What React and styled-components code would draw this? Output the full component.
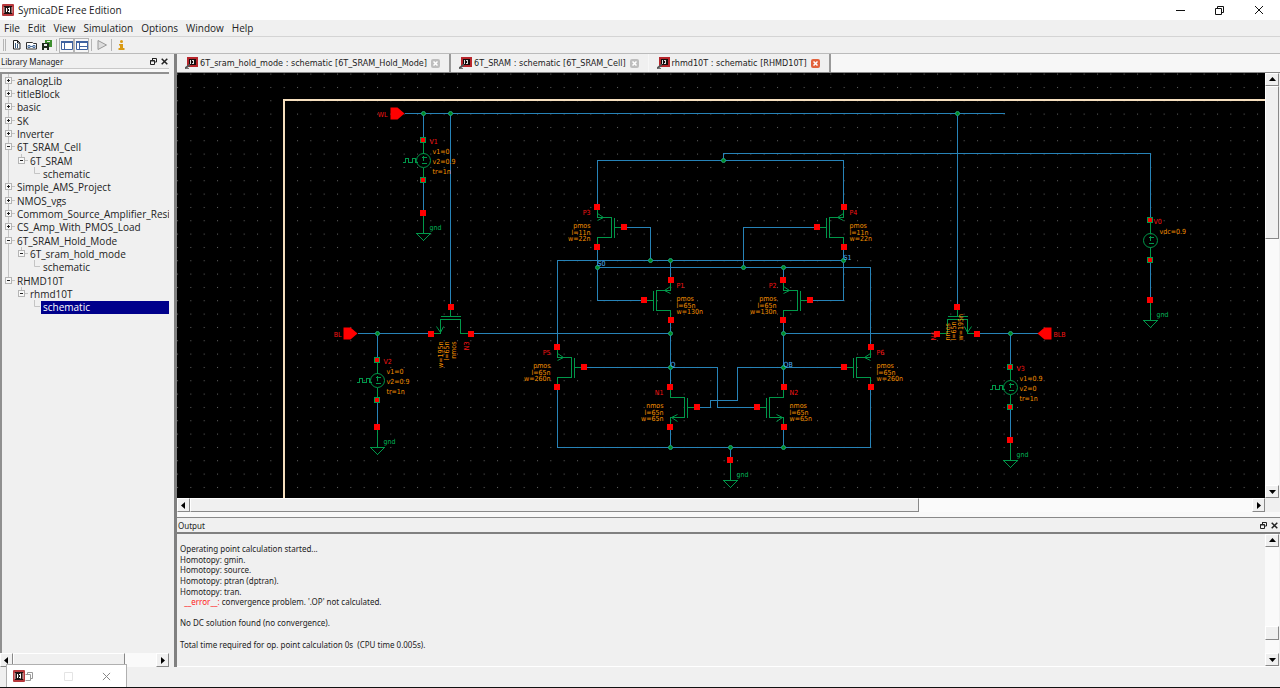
import styled, { createGlobalStyle } from 'styled-components';

const GlobalStyle = createGlobalStyle`
  * {
    box-sizing: border-box;
  }
  body {
    margin: 0;
    background: #f0f0f0;
    color: #222;
    font-family: 'Open Sans', 'Noto Sans', sans-serif;
    font-size: 10px;
  }
  button {
    margin: 0;
    padding: 0;
    border: none;
    background: none;
    color: inherit;
    font: inherit;
    display: flex;
    align-items: center;
    justify-content: center;
  }
  svg {
    display: block;
    flex: none;
  }
`;

const Page = styled.div`
  position: relative;
  height: 100vh;
  min-height: 600px;
  display: flex;
  flex-direction: column;
  overflow: hidden;
  border-bottom: 1px solid #111;
`;

const TitleBar = styled.header`
  flex: none;
  height: 20px;
  display: flex;
  align-items: center;
  background: #fff;
  padding: 0 2px;
  h1 {
    flex: 1;
    margin: 0 0 0 4px;
    font-size: 10px;
    line-height: 20px;
    font-weight: 400;
  }
`;

const WindowButton = styled.button`
  width: 39px;
  height: 20px;
`;

const MenuBar = styled.nav`
  flex: none;
  height: 16px;
  display: flex;
  align-items: center;
  gap: 8px;
  padding-left: 4px;
  button {
    line-height: 16px;
  }
`;

const ToolBar = styled.div`
  flex: none;
  height: 18px;
  display: flex;
  align-items: center;
  padding-left: 3px;
  border-top: 1px solid #d4d4d4;
  border-bottom: 1px solid #bbb;
`;

const ToolButton = styled.button`
  width: 15px;
  height: 15px;
  border: 1px solid ${({ $active }) => ($active ? '#b5b5b5' : 'transparent')};
  background: ${({ $active }) => ($active ? '#f6f6f6' : 'none')};
`;

const Separator = styled.span`
  width: ${({ $grip }) => ($grip ? '3px' : '1px')};
  height: 12px;
  margin: 0 ${({ $grip }) => ($grip ? '3px' : '2px')} 0 ${({ $grip }) => ($grip ? '0' : '2px')};
  border-left: 1px solid #b5b5b5;
  border-right: ${({ $grip }) => ($grip ? '1px solid #b5b5b5' : 'none')};
`;

const Workspace = styled.div`
  flex: 1;
  min-height: 0;
  display: grid;
  grid-template-columns: 174px minmax(0, 1fr);
  padding-bottom: 20px;
`;

const Dock = styled.aside`
  display: flex;
  flex-direction: column;
  min-height: 0;
  padding-right: 5px;
`;

const DockTitle = styled.div`
  flex: none;
  height: 14px;
  display: flex;
  align-items: center;
  gap: 4px;
  padding: 0 ${({ $wide }) => ($wide ? '2px' : '1px')} 0 1px;
  font-family: 'Noto Sans', sans-serif;
  font-size: 8px;
  h2 {
    flex: 1;
    margin: 0;
    font: inherit;
  }
`;

const DockRule = styled.div`
  flex: none;
  height: 4px;
  border-top: 1px solid #c8c8c8;
  background: #f8f8f8;
`;

const TreeBox = styled.div`
  flex: 1;
  min-height: 0;
  overflow: hidden;
  border-top: 2px solid #909090;
  border-left: 2px solid #909090;
`;

const Tree = styled.ul`
  height: 240px;
  margin: 0;
  padding: 0;
  list-style: none;
  display: grid;
  grid-template-rows: repeat(18, minmax(0, 1fr));
`;

const TreeRow = styled.li`
  display: flex;
  align-items: center;
  min-width: 0;
  button {
    flex: 1;
    min-width: 0;
    height: 100%;
    justify-content: flex-start;
    overflow: hidden;
    padding-left: 2px;
    white-space: nowrap;
    background: ${({ $selected }) => ($selected ? '#00008b' : 'none')};
    color: ${({ $selected }) => ($selected ? '#fff' : '#222')};
  }
`;

const Main = styled.main`
  display: flex;
  flex-direction: column;
  min-width: 0;
  min-height: 0;
  border-left: 3px solid #808080;
`;

const TabBar = styled.div`
  flex: none;
  height: 19px;
  display: flex;
  background: #f7f7f7;
  border-bottom: 1px solid #888;
`;

const Tab = styled.div`
  display: flex;
  align-items: center;
  gap: 2px;
  padding: 0 9px 0 8px;
  background: #f0f0f0;
  border-right: ${({ $divider }) => ($divider ? '2px solid #999' : '1px solid #f7f7f7')};
  font-family: 'DejaVu Sans Condensed', 'DejaVu Sans', sans-serif;
  font-size: 9px;
  white-space: nowrap;
`;

const TabClose = styled.button`
  width: 9px;
  height: 9px;
  margin-left: 2px;
  border-radius: 2px;
  background: ${({ $hot }) => ($hot ? '#e2623c' : '#bdbdbd')};
`;

const CanvasArea = styled.div`
  flex: 1;
  min-height: 0;
  display: grid;
  grid-template-columns: minmax(0, 1fr) 15px;
  grid-template-rows: minmax(0, 1fr) 14px;
`;

const Canvas = styled.div`
  overflow: hidden;
  background: #000;
  font-family: 'DejaVu Sans Condensed', 'DejaVu Sans', sans-serif;
`;

const ScrollBar = styled.div`
  display: flex;
  flex-direction: ${({ $vertical }) => ($vertical ? 'column' : 'row')};
  flex: none;
  min-width: 0;
  min-height: 0;
  margin-right: ${({ $vertical }) => ($vertical ? '1px' : '0')};
  height: ${({ $vertical }) => ($vertical ? 'auto' : '14px')};
  background: #fafafa;
`;

const ScrollButton = styled.button`
  flex: none;
  width: ${({ $vertical }) => ($vertical ? '14px' : '13px')};
  height: ${({ $vertical }) => ($vertical ? '13px' : '14px')};
  background: #f0f0f0;
  border: 1px solid;
  border-color: #fff #888 #888 #fff;
`;

const ScrollSpace = styled.div`
  flex: ${({ $grow }) => $grow};
`;

const ScrollThumb = styled.div`
  flex: ${({ $grow }) => $grow};
  background: #f0f0f0;
  border: 1px solid;
  border-color: #fff #888 #888 #fff;
`;

const Splitter = styled.div`
  flex: none;
  height: 6px;
  background: #f8f8f8;
  border-bottom: 1px solid #888;
`;

const OutputPanel = styled.section`
  flex: none;
  height: 149px;
  display: flex;
  flex-direction: column;
  border-bottom: 1px solid #fff;
`;

const OutputBody = styled.div`
  flex: 1;
  min-height: 0;
  display: grid;
  grid-template-columns: minmax(0, 1fr) 15px;
  border-top: 2px solid #808080;
`;

const Log = styled.div`
  height: 106px;
  margin: 10px 0 0 3px;
  display: grid;
  grid-template-rows: repeat(10, minmax(0, 1fr));
  align-items: center;
  font-family: 'Noto Sans', sans-serif;
  font-size: 8px;
  line-height: 10px;
  white-space: pre;
`;

const ErrorMark = styled.span`
  color: #ff1a1a;
`;

// minimised child window that floats over the status bar
const MiniWindow = styled.div`
  position: absolute;
  left: 6px;
  bottom: 0;
  width: 121px;
  height: 23px;
  display: flex;
  align-items: center;
  padding-left: 6px;
  background: #fff;
  border: 1px solid #b0b0b0;
  border-bottom: none;
  button {
    width: 39px;
    height: 20px;
  }
  button:first-of-type {
    width: 8px;
    margin-right: 16px;
  }
`;

const Logo = ({ size = 12 }) => (
  <svg width={size} height={size} viewBox='0 0 12 12'>
    <rect width='12' height='12' rx='1' fill='#b8383c' />
    <rect x='2' y='2' width='8' height='8' fill='#1b1010' />
    <path d='M1 4h2M1 6h2M1 8h2M9 4h2M9 6h2M9 8h2' stroke='#e8b8b8' />
    <path d='M4.5 4v4M4.5 6h1M7.5 3.5v5M6 4.5h1.500M6 7.500h1.500' stroke='#fff' fill='none' />
  </svg>
);

const TabIcon = () => (
  <svg width='13' height='12' viewBox='0 0 13 12'>
    <rect x='2' width='11' height='10' fill='#b8262c' />
    <rect x='4' y='2' width='7' height='6' fill='#160c0c' />
    <path d='M5.500 3v4M8.500 3v4M7 3.500h1.500M7 6.500h1.500' stroke='#ddd' />
    <path d='M0 11.500L5 7.500' stroke='#555' strokeWidth='2' />
    <path d='M1 11.500h3' stroke='#777' />
  </svg>
);

const Cross = ({ size = 7, color = '#222', width = 1 }) => (
  <svg width={size} height={size} viewBox='0 0 10 10'>
    <path d='M1 1l8 8M9 1l-8 8' stroke={color} strokeWidth={(width * 10) / size} />
  </svg>
);

const FloatIcon = () => (
  <svg width='7' height='7' viewBox='0 0 7 7' fill='none' stroke='#222'>
    <path d='M2 .5h4.500v3.500h-1.500M2.500 0v2' />
    <path d='M.5 2.500h4v4h-4zM0 3h5' />
  </svg>
);

const arrows = {
  up: 'M0 5L3.500 1L7 5z',
  down: 'M0 2L3.500 6L7 2z',
  left: 'M5 0L1 3.500L5 7z',
  right: 'M2 0L6 3.500L2 7z',
};

const Arrow = ({ to }) => (
  <ScrollButton $vertical={to === 'up' || to === 'down'} aria-label={`Scroll ${to}`}>
    <svg width='7' height='7'>
      <path d={arrows[to]} fill='#000' />
    </svg>
  </ScrollButton>
);

const DockButtons = () => (
  <>
    <button aria-label='Float'>
      <FloatIcon />
    </button>
    <button aria-label='Close'>
      <Cross width={1.5} />
    </button>
  </>
);

const guidePaths = {
  line: <path d='M6.500 0v14' />,
  last: <path d='M6.500 0v6.500h5.500' />,
  blank: null,
};

const Guide = ({ kind, end }) => {
  const toggle = kind === 'plus' || kind === 'minus';
  return (
    <svg width='13' height='14' fill='none' stroke='#c4c4c4'>
      {toggle ? (
        <>
          <path d={end ? 'M6.500 0v4M9 6.500h4' : 'M6.500 0v14M9 6.500h4'} />
          <rect x='3.500' y='3.500' width='6' height='6' fill='#f8f8f8' stroke='#b4b4b4' />
          <path d={kind === 'plus' ? 'M5 6.500h3M6.500 5v3' : 'M5 6.500h3'} stroke='#222' />
        </>
      ) : (
        guidePaths[kind]
      )}
    </svg>
  );
};

const tree = [
  ['analogLib', 'plus'],
  ['titleBlock', 'plus'],
  ['basic', 'plus'],
  ['SK', 'plus'],
  ['Inverter', 'plus'],
  ['6T_SRAM_Cell', 'minus'],
  ['6T_SRAM', 'line', 'minus'],
  ['schematic', 'line', 'blank', 'last'],
  ['Simple_AMS_Project', 'plus'],
  ['NMOS_vgs', 'plus'],
  ['Commom_Source_Amplifier_Resistor', 'plus'],
  ['CS_Amp_With_PMOS_Load', 'plus'],
  ['6T_SRAM_Hold_Mode', 'minus'],
  ['6T_sram_hold_mode', 'line', 'minus'],
  ['schematic', 'line', 'blank', 'last'],
  ['RHMD10T', 'minus'],
  ['rhmd10T', 'blank', 'minus'],
  ['schematic', 'blank', 'blank', 'last'],
];

const menus = ['File', 'Edit', 'View', 'Simulation', 'Options', 'Window', 'Help'];

const tabs = [
  { title: '6T_sram_hold_mode : schematic [6T_SRAM_Hold_Mode]', divider: true },
  { title: '6T_SRAM : schematic [6T_SRAM_Cell]' },
  { title: 'rhmd10T : schematic [RHMD10T]', divider: true, active: true },
];

const wires = [
  'M404 113H1004',
  'M423 113V140M423 180V214',
  'M450 113V307',
  'M957 113V307',
  'M723 160V153H1150V220M1150 260V300',
  'M597 207V160H843V207',
  'M597 247V300H644',
  'M624 227H650V260',
  'M557 347V260H843',
  'M597 267H870V347',
  'M843 247V300H810',
  'M817 227H743V267',
  'M670 260V280M670 320V387M670 427V447',
  'M783 267V280M783 320V387M783 427V447',
  'M357 333H430M470 333H670M783 333H937M977 333H1037',
  'M377 333V360M377 400V427',
  'M1010 333V367M1010 407V440',
  'M584 367H717V407H757',
  'M697 407H710V400H737V367H843',
  'M557 387V447H870V387',
  'M730 447V460',
];

const junctions = [
  [423, 113], [450, 113], [957, 113], [723, 160], [650, 260], [670, 260], [843, 260],
  [597, 267], [743, 267], [783, 267], [377, 333], [670, 333], [783, 333], [1010, 333],
  [670, 367], [783, 367], [670, 447], [730, 447], [783, 447],
];

const transistors = [
  { name: 'P3', type: 'pmos', x: 597, y: 227, l: '11n', w: '22n' },
  { name: 'P4', type: 'pmos', x: 843, y: 227, l: '11n', w: '22n', flip: true },
  { name: 'P1', type: 'pmos', x: 670, y: 300, l: '65n', w: '130n', flip: true },
  { name: 'P2', type: 'pmos', x: 783, y: 300, l: '65n', w: '130n' },
  { name: 'P5', type: 'pmos', x: 557, y: 367, l: '65n', w: '260n' },
  { name: 'P6', type: 'pmos', x: 870, y: 367, l: '65n', w: '260n', flip: true },
  { name: 'N1', type: 'nmos', x: 670, y: 407, l: '65n', w: '65n' },
  { name: 'N2', type: 'nmos', x: 783, y: 407, l: '65n', w: '65n', flip: true },
];

const sources = [
  { name: 'V1', x: 423, y: 160, gnd: 213, pulse: true, values: ['v1=0', 'v2=0.9', 'tr=1n'] },
  { name: 'V2', x: 377, y: 380, gnd: 427, pulse: true, values: ['v1=0', 'v2=0.9', 'tr=1n'] },
  { name: 'V3', x: 1010, y: 387, gnd: 440, pulse: true, values: ['v1=0.9', 'v2=0', 'tr=1n'] },
  { name: 'V0', x: 1150, y: 240, gnd: 300, values: ['vdc=0.9'] },
];

const GREEN = '#00984a';
const LABEL_GREEN = '#00b458';
const ORANGE = '#f59000';
const RED = '#f81414';

const Pin = ({ x, y }) => <rect x={x - 3.5} y={y - 3.5} width='6' height='6' fill='#f00' />;

const MosShape = ({ type }) => (
  <>
    <path
      d='M0 -20V-10H14V10H0V20M17 -10V10M17 0H27'
      fill='none'
      stroke={GREEN}
    />
    <path
      d={type === 'pmos' ? 'M0 -14L6 -10L0 -7' : 'M7 7L1 10L7 14'}
      fill='none'
      stroke={GREEN}
      shapeRendering='auto'
    />
    <Pin x={0} y={-20} />
    <Pin x={0} y={20} />
    <Pin x={27} y={0} />
  </>
);

const Mos = ({ name, type, x, y, l, w, flip }) => {
  const textX = flip ? x + 6 : x - 7;
  const anchor = flip ? 'start' : 'end';
  return (
    <g>
      <g transform={`translate(${x} ${y}) scale(${flip ? -1 : 1} 1)`}>
        <MosShape type={type} />
      </g>
      <text x={textX} y={y - 13} fill={RED} textAnchor={anchor}>
        {name}
      </text>
      {[type, `l=${l}`, `w=${w}`].map((line, i) => (
        <text key={line} x={textX} y={y + [0, 7, 13][i]} fill={ORANGE} textAnchor={anchor}>
          {line}
        </text>
      ))}
    </g>
  );
};

const Ground = ({ x, y }) => (
  <g>
    <path d={`M${x} ${y}v20M${x - 7} ${y + 20}h14l-7 7z`} fill='none' stroke={GREEN} />
    <Pin x={x} y={y} />
    <text x={x + 6} y={y + 16} fill={LABEL_GREEN}>
      gnd
    </text>
  </g>
);

const Source = ({ name, x, y, gnd, pulse, values }) => (
  <g>
    <g fill='none' stroke={GREEN}>
      <path d={`M${x} ${y - 20}v13M${x} ${y + 7}v13`} />
      <circle cx={x} cy={y} r='7' shapeRendering='auto' />
      <path d={`M${x - 2} ${y - 3}h5M${x} ${y - 5}v5M${x - 2} ${y + 3}h5`} />
      {pulse && <path d={`M${x - 21} ${y + 2}h3v-4h3v4h4v-4h3v4h2`} />}
      <rect x={x - 3} y={y - 23} width='5' height='5' fill='#f00' />
      <rect x={x - 3} y={y + 17} width='5' height='5' fill='#f00' />
    </g>
    <text x={pulse ? x + 6 : x + 3} y={y - 17} fill={RED}>
      {name}
    </text>
    {values.map((value, i) => (
      <text key={value} x={x + 9} y={y - 7 + i * 10} fill={ORANGE}>
        {value}
      </text>
    ))}
    <Ground x={x} y={gnd} />
  </g>
);

const SideText = ({ x, y, fill = ORANGE, anchor = 'end', children }) => (
  <text transform={`translate(${x} ${y}) rotate(-90)`} fill={fill} textAnchor={anchor}>
    {children}
  </text>
);

const Schematic = () => (
  <svg width='1088' height='425' viewBox='177 73 1088 425' fontSize='7'>
    <defs>
      <pattern
        id='grid'
        x='177'
        y='73.6'
        width='13.333'
        height='13.333'
        patternUnits='userSpaceOnUse'
      >
        <rect width='1' height='1' fill='#666' />
      </pattern>
    </defs>
    <rect x='177' y='73' width='1088' height='425' fill='url(#grid)' />
    <g transform='translate(.5 .5)' shapeRendering='crispEdges'>
      <path d='M283.5 500V99.500H1270' fill='none' stroke='#f6dfbe' strokeWidth='2' />
      <g fill='none' stroke='#2783b8'>
        {wires.map((d) => (
          <path key={d} d={d} />
        ))}
      </g>
      {transistors.map((item) => (
        <Mos key={item.name} {...item} />
      ))}
      {sources.map((item) => (
        <Source key={item.name} {...item} />
      ))}
      <Ground x={730} y={460} />

      <g transform='translate(450 333) rotate(-90) scale(1 -1)'>
        <MosShape type='nmos' />
      </g>
      <SideText x={442} y={341}>w=195n</SideText>
      <SideText x={448} y={341}>l=65n</SideText>
      <SideText x={455} y={341}>nmos</SideText>
      <SideText x={468} y={341} fill={RED}>N3</SideText>

      <g transform='translate(957 333) rotate(-90)'>
        <MosShape type='nmos' />
      </g>
      <SideText x={962} y={340} anchor='start'>w=195n</SideText>
      <SideText x={955} y={340} anchor='start'>l=65n</SideText>
      <SideText x={949} y={340} anchor='start'>nmos</SideText>
      <SideText x={935} y={340} anchor='start' fill={RED}>N4</SideText>

      <g fill='#f00' shapeRendering='auto'>
        <path d='M390 107h7l7 6l-7 6h-7z' />
        <path d='M343 327h7l7 6l-7 6h-7z' />
        <path d='M1051 327h-7l-7 6l7 6h7z' />
      </g>
      <g fill={RED}>
        <text x='387' y='116' textAnchor='end'>WL</text>
        <text x='341' y='336' textAnchor='end'>BL</text>
        <text x='1053' y='336'>BLB</text>
      </g>
      <g fill='#008a20' stroke='#1fa37a' shapeRendering='auto'>
        {junctions.map(([x, y]) => (
          <circle key={`${x}-${y}`} cx={x} cy={y} r='2' />
        ))}
      </g>
      <g fill='#4fb4ff'>
        <text x='597' y='265'>S0</text>
        <text x='843' y='259'>S1</text>
        <text x='670' y='366'>Q</text>
        <text x='783' y='366'>QB</text>
      </g>
    </g>
  </svg>
);

const NewIcon = () => (
  <svg width='9' height='10' viewBox='0 0 9 10' fill='#fff' stroke='#222'>
    <path d='M1.500 .5h4l2.500 2.500v6h-6.500z' />
    <path d='M3.500 3v5M5.500 4v4' stroke='#36577a' />
    <path d='M5.500 .5v2.500h2.500' fill='none' />
  </svg>
);

const OpenIcon = () => (
  <svg width='11' height='9' viewBox='0 0 11 9' fill='#fff' stroke='#333'>
    <path d='M.5 1.500h6l1 1h3v5.500h-10z' />
    <path d='M2 4.500h2v2h-2zM7 4.500h2v2h-2zM4 5.500h3' fill='none' stroke='#4a6f9c' />
  </svg>
);

const SaveIcon = () => (
  <svg width='10' height='10' viewBox='0 0 10 10'>
    <path d='M3 0h7v7h-7z' fill='#3d8f2e' />
    <path d='M0 3h7v7h-7z' fill='#1d2b1d' />
    <path d='M2 4h3v2h-3zM2 8h3v2h-3zM5 1h3v1h-3z' fill='#eee' />
  </svg>
);

const LayoutIcon = ({ split }) => (
  <svg width='12' height='9' viewBox='0 0 12 9' fill='#fff' stroke='#3f62a0'>
    <path d='M.5 .5h11v8h-11z' />
    <path d='M0 1h12' strokeWidth='2' />
    <path d={split ? 'M3.500 1v7M4 5.500h8' : 'M3.500 1v7'} />
  </svg>
);

const App = () => {
  return (
    <>
      <GlobalStyle />
      <Page>
        <TitleBar>
          <Logo />
          <h1>SymicaDE Free Edition</h1>
          <WindowButton aria-label='Minimize'>
            <svg width='9' height='9'>
              <path d='M0 4.500h9' stroke='#111' />
            </svg>
          </WindowButton>
          <WindowButton aria-label='Restore'>
            <svg width='9' height='9' fill='none' stroke='#111'>
              <path d='M.5 2.500h6v6h-6zM2.500 2v-1.500h6v6h-2' />
            </svg>
          </WindowButton>
          <WindowButton aria-label='Close'>
            <Cross size={10} color='#111' />
          </WindowButton>
        </TitleBar>
        <MenuBar>
          {menus.map((menu) => (
            <button key={menu}>{menu}</button>
          ))}
        </MenuBar>
        <ToolBar>
          <Separator $grip />
          <ToolButton aria-label='New'>
            <NewIcon />
          </ToolButton>
          <ToolButton aria-label='Open'>
            <OpenIcon />
          </ToolButton>
          <ToolButton aria-label='Save all'>
            <SaveIcon />
          </ToolButton>
          <Separator />
          <ToolButton $active aria-label='Library manager'>
            <LayoutIcon />
          </ToolButton>
          <ToolButton $active aria-label='Output'>
            <LayoutIcon split />
          </ToolButton>
          <Separator />
          <ToolButton aria-label='Run'>
            <svg width='10' height='10'>
              <path d='M1 .5v9L9.500 5z' fill='#ddd' stroke='#999' />
            </svg>
          </ToolButton>
          <Separator />
          <ToolButton aria-label='About'>
            <svg width='7' height='10' fill='#d99a14'>
              <circle cx='3.500' cy='1.500' r='1.500' />
              <path d='M1 4h4v4h1.500v2h-6v-2h1.500v-2.500h-1z' />
            </svg>
          </ToolButton>
        </ToolBar>

        <Workspace>
          <Dock>
            <DockTitle>
              <h2>Library Manager</h2>
              <DockButtons />
            </DockTitle>
            <DockRule />
            <TreeBox>
              <Tree>
                {tree.map(([label, ...guides], index) => (
                  <TreeRow key={index} $selected={index === tree.length - 1}>
                    {guides.map((kind, i) => (
                      <Guide
                        key={i}
                        kind={kind}
                        end={i > 0 || label === 'RHMD10T'}
                      />
                    ))}
                    <button>{label}</button>
                  </TreeRow>
                ))}
              </Tree>
            </TreeBox>
            <ScrollBar>
              <Arrow to='left' />
              <ScrollThumb $grow={112} />
              <ScrollSpace $grow={31} />
              <Arrow to='right' />
            </ScrollBar>
          </Dock>

          <Main>
            <TabBar>
              {tabs.map((tab) => (
                <Tab key={tab.title} $divider={tab.divider}>
                  <TabIcon />
                  <button>{tab.title}</button>
                  <TabClose $hot={tab.active} aria-label='Close tab'>
                    <Cross size={5} color='#fff' width={1.5} />
                  </TabClose>
                </Tab>
              ))}
            </TabBar>
            <CanvasArea>
              <Canvas>
                <Schematic />
              </Canvas>
              <ScrollBar $vertical>
                <Arrow to='up' />
                <ScrollThumb $grow={151} />
                <ScrollSpace $grow={247} />
                <Arrow to='down' />
              </ScrollBar>
              <ScrollBar>
                <Arrow to='left' />
                <ScrollThumb $grow={728} />
                <ScrollSpace $grow={333} />
                <Arrow to='right' />
              </ScrollBar>
            </CanvasArea>
            <Splitter />
            <OutputPanel>
              <DockTitle $wide>
                <h2>Output</h2>
                <DockButtons />
              </DockTitle>
              <OutputBody>
                <Log>
                  <div>Operating point calculation started...</div>
                  <div>Homotopy: gmin.</div>
                  <div>Homotopy: source.</div>
                  <div>Homotopy: ptran (dptran).</div>
                  <div>Homotopy: tran.</div>
                  <div>
                    {'  '}
                    <ErrorMark>__error__:</ErrorMark> convergence problem. '.OP' not calculated.
                  </div>
                  <div />
                  <div>No DC solution found (no convergence).</div>
                  <div />
                  <div>{'Total time required for op. point calculation 0s  (CPU time 0.005s).'}</div>
                </Log>
                <ScrollBar $vertical>
                  <Arrow to='up' />
                  <ScrollSpace $grow={80} />
                  <ScrollThumb $grow={12} />
                  <ScrollSpace $grow={13} />
                  <Arrow to='down' />
                </ScrollBar>
              </OutputBody>
            </OutputPanel>
          </Main>
        </Workspace>

        <MiniWindow>
          <Logo />
          <button aria-label='Restore window'>
            <svg width='8' height='9' fill='none' stroke='#999'>
              <path d='M.5 2.500h5v6h-5M2.500 2v-1.500h5v6h-2' />
            </svg>
          </button>
          <button aria-label='Maximize window'>
            <svg width='9' height='9' fill='none' stroke='#e4e4e4'>
              <path d='M.5 .5h8v8h-8z' />
            </svg>
          </button>
          <button aria-label='Close window'>
            <Cross size={9} color='#888' />
          </button>
        </MiniWindow>
      </Page>
    </>
  );
};

export default App;
